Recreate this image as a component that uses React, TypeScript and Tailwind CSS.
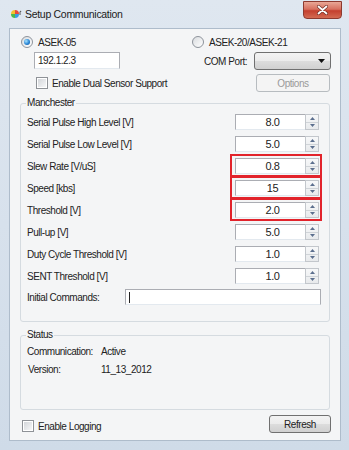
import React from "react";

function Radio({ checked }: { checked?: boolean }) {
  return (
    <span className="w-[12px] h-[12px] rounded-full border border-[#8d939b] bg-[linear-gradient(135deg,#d9dcdf,#ffffff)] flex items-center justify-center shrink-0">
      {checked && (
        <span className="w-[6px] h-[6px] rounded-full bg-[radial-gradient(circle_at_35%_35%,#a8e4ff,#2a86d6_55%,#0c4f93)]" />
      )}
    </span>
  );
}

function Check() {
  return (
    <span className="w-[12px] h-[12px] border border-[#8e9297] bg-white p-[1px] shrink-0 flex">
      <span className="flex-1 bg-[linear-gradient(135deg,#d3d6da,#f6f7f8)]" />
    </span>
  );
}

function Up() {
  return (
    <svg width="5" height="3" viewBox="0 0 5 3">
      <path d="M2.5 0 L5 3 L0 3 Z" fill="#5c6f8e" />
    </svg>
  );
}
function Down() {
  return (
    <svg width="5" height="3" viewBox="0 0 5 3">
      <path d="M0 0 L5 0 L2.5 3 Z" fill="#5c6f8e" />
    </svg>
  );
}

function Spin({ v, red }: { v: string; red?: boolean }) {
  return (
    <div className="relative flex h-[16px] w-[84px] shrink-0">
      <div className="flex-1 border border-[#abadb3] border-r-0 border-b-[#e3e9ef] bg-white flex items-center justify-center text-[11px] leading-none text-[#222] pl-[4px]">
        {v}
      </div>
      <div className="w-[14px] border border-[#c3c7cc] flex flex-col bg-[linear-gradient(to_bottom,#f7f8f9,#e8eaec)]">
        <div className="flex-1 flex items-center justify-center border-b border-[#d0d4d8]">
          <Up />
        </div>
        <div className="flex-1 flex items-center justify-center">
          <Down />
        </div>
      </div>
      {red && (
        <div className="absolute -left-[5px] -right-[3px] -top-[4px] -bottom-[3px] border-2 border-[#e2232b]" />
      )}
    </div>
  );
}

const rows: { label: string; v: string; red?: boolean }[] = [
  { label: "Serial Pulse High Level [V]", v: "8.0" },
  { label: "Serial Pulse Low Level [V]", v: "5.0" },
  { label: "Slew Rate [V/uS]", v: "0.8", red: true },
  { label: "Speed [kbs]", v: "15", red: true },
  { label: "Threshold [V]", v: "2.0", red: true },
  { label: "Pull-up [V]", v: "5.0" },
  { label: "Duty Cycle Threshold [V]", v: "1.0" },
  { label: "SENT Threshold [V]", v: "1.0" },
];

export default function App() {
  return (
    <div className="w-[349px] h-[450px] bg-[linear-gradient(to_bottom,#dfe7f0,#cfdbe8)] font-['Liberation_Sans',Arial,sans-serif] text-[10px] tracking-[-0.45px] text-[#222] flex flex-col overflow-hidden">
      {/* title bar */}
      <div className="h-[28px] flex items-start shrink-0">
        <div className="flex items-center h-[28px] pl-[10px] gap-[3px]">
          <svg width="12" height="11" viewBox="0 0 12 11">
            <path d="M5 1 A4 4 0 0 1 9 5 L5 5 Z" fill="#e84a3c" />
            <path d="M9 5 A4 4 0 0 1 5 9 L5 5 Z" fill="#3a9be0" />
            <path d="M5 9 A4 4 0 0 1 1 5 L5 5 Z" fill="#4cb84c" />
            <path d="M1 5 A4 4 0 0 1 5 1 L5 5 Z" fill="#f2c230" />
            <path d="M9.5 3 L11.5 3 L10.5 1.5 Z" fill="#555" />
            <path d="M10 3 L10 6" stroke="#555" strokeWidth="1" />
          </svg>
          <span className="text-[10.5px] tracking-[-0.3px] text-[#1b1b1b] leading-none">Setup Communication</span>
        </div>
        <div className="ml-auto mr-[7px] mt-[1px] w-[39px] h-[18px] rounded-b-[4px] border border-[#8d3a30] bg-[linear-gradient(to_bottom,#e9a796,#d7705f_45%,#c4402f_55%,#d36a52)] flex items-center justify-center">
          <svg width="11" height="10" viewBox="0 0 11 10">
            <path d="M1.5 1.5 L9.5 8.5 M9.5 1.5 L1.5 8.5" stroke="#6b2a22" strokeWidth="3" strokeLinecap="round" />
            <path d="M1.5 1.5 L9.5 8.5 M9.5 1.5 L1.5 8.5" stroke="#ffffff" strokeWidth="1.8" strokeLinecap="round" />
          </svg>
        </div>
      </div>

      {/* client area */}
      <div className="ml-[9px] mr-[8px] h-[413px] bg-[#f4f5f6] border border-[#aebccb] flex flex-col">
        {/* top section */}
        <div className="flex pt-[6px]">
          <div className="w-[181px] pl-[11px] flex flex-col">
            <div className="flex items-center h-[14px] gap-[5px]">
              <Radio checked />
              <span>ASEK-05</span>
            </div>
            <div className="mt-[3px] ml-[13px] w-[86px] h-[17px] border border-[#abadb3] border-b-[#e3e9ef] bg-white flex items-center pl-[3px]">
              192.1.2.3
            </div>
            <div className="mt-[8px] ml-[15px] flex items-center gap-[4px] h-[12px]">
              <Check />
              <span>Enable Dual Sensor Support</span>
            </div>
          </div>
          <div className="flex-1 flex flex-col">
            <div className="flex items-center h-[14px] gap-[5px] pl-[1px]">
              <Radio />
              <span>ASEK-20/ASEK-21</span>
            </div>
            <div className="mt-[3px] flex items-center h-[18px]">
              <span className="pl-[13px] whitespace-nowrap">COM Port:</span>
              <div className="ml-auto mr-[9px] w-[77px] h-[18px] rounded-[3px] border border-[#707070] bg-[linear-gradient(to_bottom,#f3f3f3,#ebebeb_50%,#dddddd_50%,#d0d0d0)] flex items-center justify-end pr-[5px]">
                <svg width="7" height="4" viewBox="0 0 7 4">
                  <path d="M0 0 L7 0 L3.5 4 Z" fill="#111" />
                </svg>
              </div>
            </div>
            <div className="mt-[4px] ml-auto mr-[10px] w-[74px] h-[18px] rounded-[3px] border border-[#b7bcc0] bg-[#f4f4f4] flex items-center justify-center text-[#9a9a9a]">
              Options
            </div>
          </div>
        </div>

        {/* Manchester */}
        <fieldset className="mt-[4px] ml-[10px] mr-[10px] border border-[#d5dbe0] rounded-[3px] pl-[6px] pr-[10px] pb-[16px]">
          <legend className="px-[1px] -ml-[1px] leading-[14px]">Manchester</legend>
          <div className="flex flex-col pt-[1px]">
            {rows.map((r) => (
              <div key={r.label} className="h-[22px] flex items-center justify-between">
                <span>{r.label}</span>
                <Spin v={r.v} red={r.red} />
              </div>
            ))}
            <div className="mt-[2px] h-[16px] flex items-center">
              <span className="w-[98px]">Initial Commands:</span>
              <div className="flex-1 -mr-[2px] h-[16px] border border-[#abadb3] border-b-[#e3e9ef] bg-white flex items-center pl-[3px]">
                <span className="w-[1px] h-[11px] bg-[#222]" />
              </div>
            </div>
          </div>
        </fieldset>

        {/* Status */}
        <fieldset className="mt-[6px] ml-[10px] mr-[10px] border border-[#d5dbe0] rounded-[3px] pl-[6px] pr-[10px] pb-[31px]">
          <legend className="px-[1px] -ml-[1px] leading-[14px]">Status</legend>
          <div className="flex flex-col">
            <div className="h-[18px] flex items-center">
              <span className="w-[74px]">Communication:</span>
              <span>Active</span>
            </div>
            <div className="h-[18px] flex items-center">
              <span className="w-[74px] pl-[1px]">Version:</span>
              <span>11_13_2012</span>
            </div>
          </div>
        </fieldset>

        {/* bottom row */}
        <div className="mt-[5px] h-[18px] flex items-center pl-[12px] pr-[9px]">
          <div className="flex items-center gap-[4px] mt-[4px]">
            <Check />
            <span>Enable Logging</span>
          </div>
          <div className="ml-auto w-[62px] h-[18px] rounded-[3px] border border-[#707070] bg-[linear-gradient(to_bottom,#f3f3f3,#ebebeb_50%,#dddddd_50%,#d0d0d0)] flex items-center justify-center">
            Refresh
          </div>
        </div>
      </div>
    </div>
  );
}
